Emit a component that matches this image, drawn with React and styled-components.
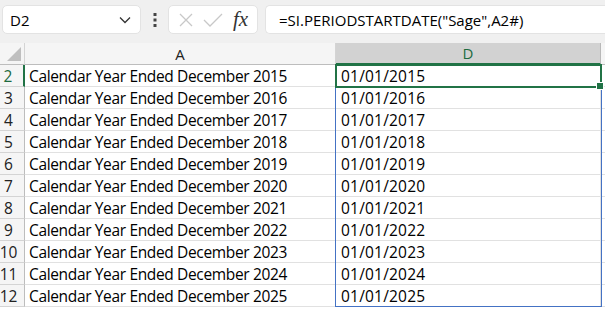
import React from "react";
import styled, { createGlobalStyle } from "styled-components";

const GlobalStyle = createGlobalStyle`
  html, body {
    margin: 0;
    padding: 0;
    background: #ffffff;
    overflow: hidden;
  }
  * {
    box-sizing: border-box;
  }
`;

const Page = styled.div`
  width: 605px;
  height: 309px;
  overflow: hidden;
  font-family: "Open Sans", "Liberation Sans", sans-serif;
  color: #000;
`;

const Toolbar = styled.div`
  height: 43px;
  background: #f0f0f0;
  display: flex;
  align-items: center;
  padding: 0 0 4px 2px;
`;

const NameBox = styled.div`
  width: 139px;
  height: 29px;
  background: #fff;
  border: 1px solid #e3e3e3;
  border-radius: 5px;
  display: flex;
  align-items: center;
  justify-content: space-between;
  padding: 0 9px 0 7px;
  font-size: 15px;
`;

const Dots = styled.div`
  width: 27px;
  display: flex;
  justify-content: center;
`;

const FxBox = styled.div`
  width: 90px;
  height: 29px;
  background: #fff;
  border: 1px solid #e3e3e3;
  border-radius: 5px;
  display: flex;
  align-items: center;
  justify-content: space-around;
  padding: 0 4px;
`;

const FxText = styled.span`
  font-family: "Liberation Serif", "DejaVu Serif", serif;
  font-style: italic;
  font-size: 21px;
  color: #333;
  line-height: 1;
`;

const FormulaBox = styled.div`
  flex: 1;
  margin-left: 7px;
  height: 29px;
  background: #fff;
  border: 1px solid #e3e3e3;
  border-right: none;
  border-radius: 5px 0 0 5px;
  display: flex;
  align-items: center;
  padding-left: 13px;
  font-size: 15px;
  white-space: nowrap;
`;

const Grid = styled.div`
  position: relative;
  display: grid;
  grid-template-columns: 25px 311px 265px 1fr;
  grid-auto-rows: 22px;
`;

const ColHead = styled.div`
  background: ${(p) => (p.$active ? "#d2d2d2" : "#f5f5f5")};
  border-right: 1px solid ${(p) => (p.$active ? "#b8b8b8" : "#d4d4d4")};
  border-bottom: ${(p) => (p.$active ? "2px solid #217346" : "1px solid #bdbdbd")};
  display: flex;
  align-items: center;
  justify-content: center;
  font-size: 15px;
  color: ${(p) => (p.$active ? "#1d6b3f" : "#222")};
`;

const Corner = styled(ColHead)`
  position: relative;
  &::after {
    content: "";
    position: absolute;
    right: 3px;
    bottom: 3px;
    border-style: solid;
    border-width: 0 0 14px 14px;
    border-color: transparent transparent #bfbfbf transparent;
  }
`;

const RowHead = styled.div`
  background: #f5f5f5;
  border-right: ${(p) => (p.$active ? "2px solid #217346" : "1px solid #bdbdbd")};
  border-bottom: 1px solid #d4d4d4;
  display: flex;
  align-items: center;
  justify-content: center;
  padding-right: 7px;
  font-size: 15.5px;
  color: ${(p) => (p.$active ? "#1d6b3f" : "#222")};
`;

const Cell = styled.div`
  border-right: 1px solid #e1e1e1;
  border-bottom: 1px solid #e1e1e1;
  display: flex;
  align-items: center;
  padding-left: ${(p) => p.$pad}px;
  font-size: 15.5px;
  letter-spacing: ${(p) => p.$track}px;
  white-space: nowrap;
  overflow: hidden;
`;

const Selection = styled.div`
  position: absolute;
  left: 335px;
  top: 21px;
  width: 267px;
  height: 24px;
  border: 2px solid #217346;
  pointer-events: none;
  &::after {
    content: "";
    position: absolute;
    right: -4px;
    bottom: -4px;
    width: 6px;
    height: 6px;
    background: #217346;
    border: 1px solid #fff;
  }
`;

const Spill = styled.div`
  position: absolute;
  left: 335px;
  top: 21px;
  width: 267px;
  height: 243px;
  border: 1px solid #4472c4;
  pointer-events: none;
`;

const years = [2015, 2016, 2017, 2018, 2019, 2020, 2021, 2022, 2023, 2024, 2025];

export default function App() {
  return (
    <Page>
      <GlobalStyle />
      <Toolbar>
        <NameBox>
          <span>D2</span>
          <svg width="12" height="8" viewBox="0 0 12 8">
            <path d="M1 1.5 L6 6.5 L11 1.5" fill="none" stroke="#333" strokeWidth="1.3" />
          </svg>
        </NameBox>
        <Dots>
          <svg width="4" height="14" viewBox="0 0 4 14">
            <rect x="0.5" y="0" width="3" height="3" fill="#444" />
            <rect x="0.5" y="5.5" width="3" height="3" fill="#444" />
            <rect x="0.5" y="11" width="3" height="3" fill="#444" />
          </svg>
        </Dots>
        <FxBox>
          <svg width="16" height="16" viewBox="0 0 16 16">
            <path d="M2 2 L14 14 M14 2 L2 14" stroke="#c8c8c8" strokeWidth="1.3" fill="none" />
          </svg>
          <svg width="20" height="16" viewBox="0 0 20 16">
            <path d="M1 8 L7 14 L19 2" stroke="#c8c8c8" strokeWidth="1.3" fill="none" />
          </svg>
          <FxText>fx</FxText>
        </FxBox>
        <FormulaBox>=SI.PERIODSTARTDATE("Sage",A2#)</FormulaBox>
      </Toolbar>
      <Grid>
        <Corner />
        <ColHead>A</ColHead>
        <ColHead $active>D</ColHead>
        <ColHead />
        {years.map((y, i) => (
          <React.Fragment key={y}>
            <RowHead $active={i === 0}>{i + 2}</RowHead>
            <Cell $pad={4} $track={-0.35}>Calendar Year Ended December {y}</Cell>
            <Cell $pad={5} $track={0.2}>01/01/{y}</Cell>
            <Cell $pad={4} $track={0} />
          </React.Fragment>
        ))}
        <Spill />
        <Selection />
      </Grid>
    </Page>
  );
}
